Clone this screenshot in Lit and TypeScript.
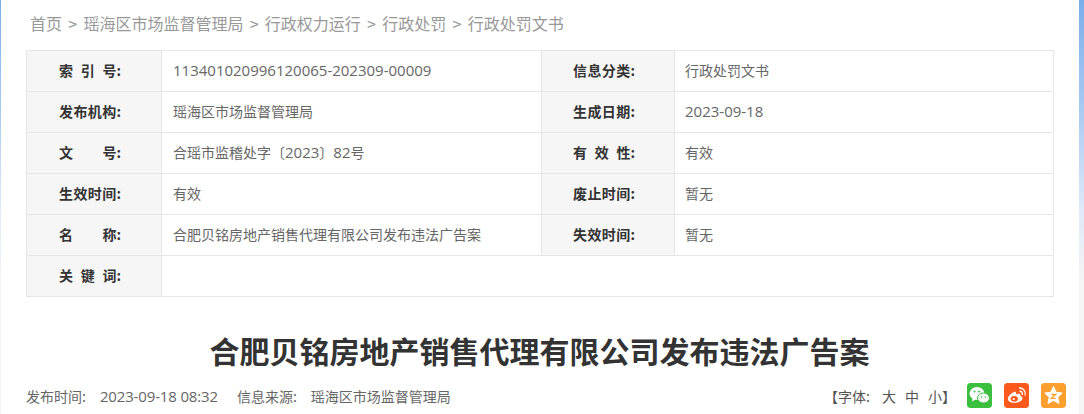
import { LitElement, html, css } from "lit";
import { customElement } from "lit/decorators.js";

const n = (s: string) => html`<span class="num">${s}</span>`;
const rows: any[][] = [
  ["索 引 号:", n("113401020996120065-202309-00009"), "信息分类:", "行政处罚文书"],
  ["发布机构:", "瑶海区市场监督管理局", "生成日期:", n("2023-09-18")],
  ["文 号:", html`合瑶市监稽处字〔${n("2023")}〕${n("82")}号`, "有 效 性:", "有效"],
  ["生效时间:", "有效", "废止时间:", "暂无"],
  ["名 称:", "合肥贝铭房地产销售代理有限公司发布违法广告案", "失效时间:", "暂无"],
  ["关 键 词:", ""],
];

const label = (s: string) =>
  html`<div class="lab">${s.split(" ").map((p) => html`<span>${p}</span>`)}</div>`;

@customElement("app-root")
export class AppRoot extends LitElement {
  static styles = css`
    :host {
      display: block;
      width: 1084px;
      height: 414px;
      overflow: hidden;
      background: #fff;
      font-family: "Noto Sans CJK SC", "Open Sans", sans-serif;
    }
    .frame {
      display: flex;
      height: 414px;
      background: linear-gradient(#7aaeea 0, #a9caf3 110px, #dfe9f8 210px, #f5f5f5 285px);
    }
    .page {
      flex: 1;
      min-width: 0;
      margin-left: 1px;
      margin-right: 5px;
      background: #fff;
      padding: 0 24px 0 25px;
      box-sizing: border-box;
    }
    .crumbs {
      height: 50px;
      padding: 0 0 5px 4px;
      box-sizing: border-box;
      display: flex;
      align-items: center;
      gap: 6.25px;
      font-size: 16px;
      color: #999;
    }
    table {
      border-collapse: collapse;
      width: 1028px;
      table-layout: fixed;
      font-size: 14px;
    }
    td {
      height: 41px;
      padding: 0 0 3px;
      border: 1px solid #e6e6e6;
      color: #666;
      box-sizing: border-box;
    }
    td.l {
      background: #f6f6f6;
      color: #333;
      font-weight: 700;
      padding-left: 32px;
    }
    td.l2 {
      padding-left: 31px;
    }
    .lab {
      display: flex;
      justify-content: space-between;
      width: 62px;
      white-space: nowrap;
    }
    .lab span:only-child {
      letter-spacing: 0.4px;
    }
    td.v {
      padding-left: 11px;
    }
    td.v2 {
      padding-left: 10px;
    }
    .num {
      font-family: "Open Sans", sans-serif;
      font-size: 15px;
    }
    h1 {
      margin: 0 2px 0 0;
      height: 74px;
      line-height: 106px;
      text-align: center;
      font-size: 30px;
      font-weight: 700;
      color: #333;
    }
    .meta {
      display: flex;
      align-items: center;
      height: 50px;
      font-size: 14px;
      color: #666;
      white-space: pre;
    }
    .when { letter-spacing: -0.15px; }
    .src { margin-left: 19px; }
    .gap { margin-left: 14px; }
    .spacer { flex: 1; }
    .font { display: flex; gap: 9px; margin-right: 11px; color: #555; }
    .font .first { margin-right: 3px; }
    .share { display: flex; gap: 12px; margin: -1px -11px 0 0; }
    .ico {
      width: 25px;
      height: 25px;
      border-radius: 3px;
      display: block;
    }
  `;

  render() {
    return html`<div class="frame">
      <div class="page">
        <div class="crumbs">
          <span>首页</span><span>&gt;</span><span>瑶海区市场监督管理局</span><span>&gt;</span>
          <span>行政权力运行</span><span>&gt;</span><span>行政处罚</span><span>&gt;</span><span>行政处罚文书</span>
        </div>
        <table>
          <colgroup><col style="width:135px" /><col style="width:380px" /><col style="width:133px" /><col /></colgroup>
          ${rows.map((r) =>
            r.length > 2
              ? html`<tr><td class="l">${label(r[0])}</td><td class="v">${r[1]}</td><td class="l l2">${label(r[2])}</td><td class="v v2">${r[3]}</td></tr>`
              : html`<tr><td class="l">${label(r[0])}</td><td class="v" colspan="3">${r[1]}</td></tr>`
          )}
        </table>
        <h1>合肥贝铭房地产销售代理有限公司发布违法广告案</h1>
        <div class="meta">
          <span>发布时间:</span><span class="gap num when">2023-09-18 08:32</span><span class="src">信息来源:</span><span class="gap">瑶海区市场监督管理局</span><span class="spacer"></span><span class="font"><span class="first">【字体:</span><span>大</span><span>中</span><span>小】</span></span><span class="share">
            <svg class="ico" viewBox="0 0 25 25"><rect width="25" height="25" rx="3" fill="#3bbf3f"/><ellipse cx="10" cy="10.500" rx="7.500" ry="6.500" fill="#fff"/><path d="M5.500 15L5 18.500L8.500 16.500Z" fill="#fff"/><ellipse cx="16.500" cy="15" rx="6" ry="5" fill="#fff" stroke="#3bbf3f"/><circle cx="7.500" cy="8.500" r="1" fill="#3bbf3f"/><circle cx="12" cy="8.500" r="1" fill="#3bbf3f"/><circle cx="14.500" cy="14" r=".8" fill="#3bbf3f"/><circle cx="18.500" cy="14" r=".8" fill="#3bbf3f"/></svg>
            <svg class="ico" viewBox="0 0 25 25"><rect width="25" height="25" rx="3" fill="#fb5a1c"/><path d="M10 9C5 11 3 15 4.300 17.500C6 20.300 12.500 20.500 16 18.500C19.500 16.500 19 13.500 16.300 13C17.300 10.500 14.500 10 12 11.500C12.500 9.500 11.500 8.500 10 9Z" fill="#fff"/><ellipse cx="10.300" cy="15.800" rx="3.700" ry="2.800" fill="#fb5a1c"/><circle cx="9.700" cy="16" r="1.100" fill="#fff"/><path d="M15 5C19 4.500 22 8 21 12.500M15.500 8.300C17.500 8 18.800 9.800 18.300 11.700" fill="none" stroke="#fff" stroke-width="1.400"/></svg>
            <svg class="ico" viewBox="0 0 25 25"><rect width="25" height="25" rx="3" fill="#fd9f2e"/><path d="M12.500 3.500L15.200 9.300L21.200 10.100L16.800 14.300L18 20.500L12.500 17.500L7 20.500L8.200 14.300L3.800 10.100L9.800 9.300Z" fill="#fff" stroke="#fff" stroke-width="1" stroke-linejoin="round"/><path d="M10.300 11.500H14.700L10.300 15.300H14.700" fill="none" stroke="#fd9f2e" stroke-width="1.300"/></svg>
          </span>
        </div>
      </div>
    </div>`;
  }
}
